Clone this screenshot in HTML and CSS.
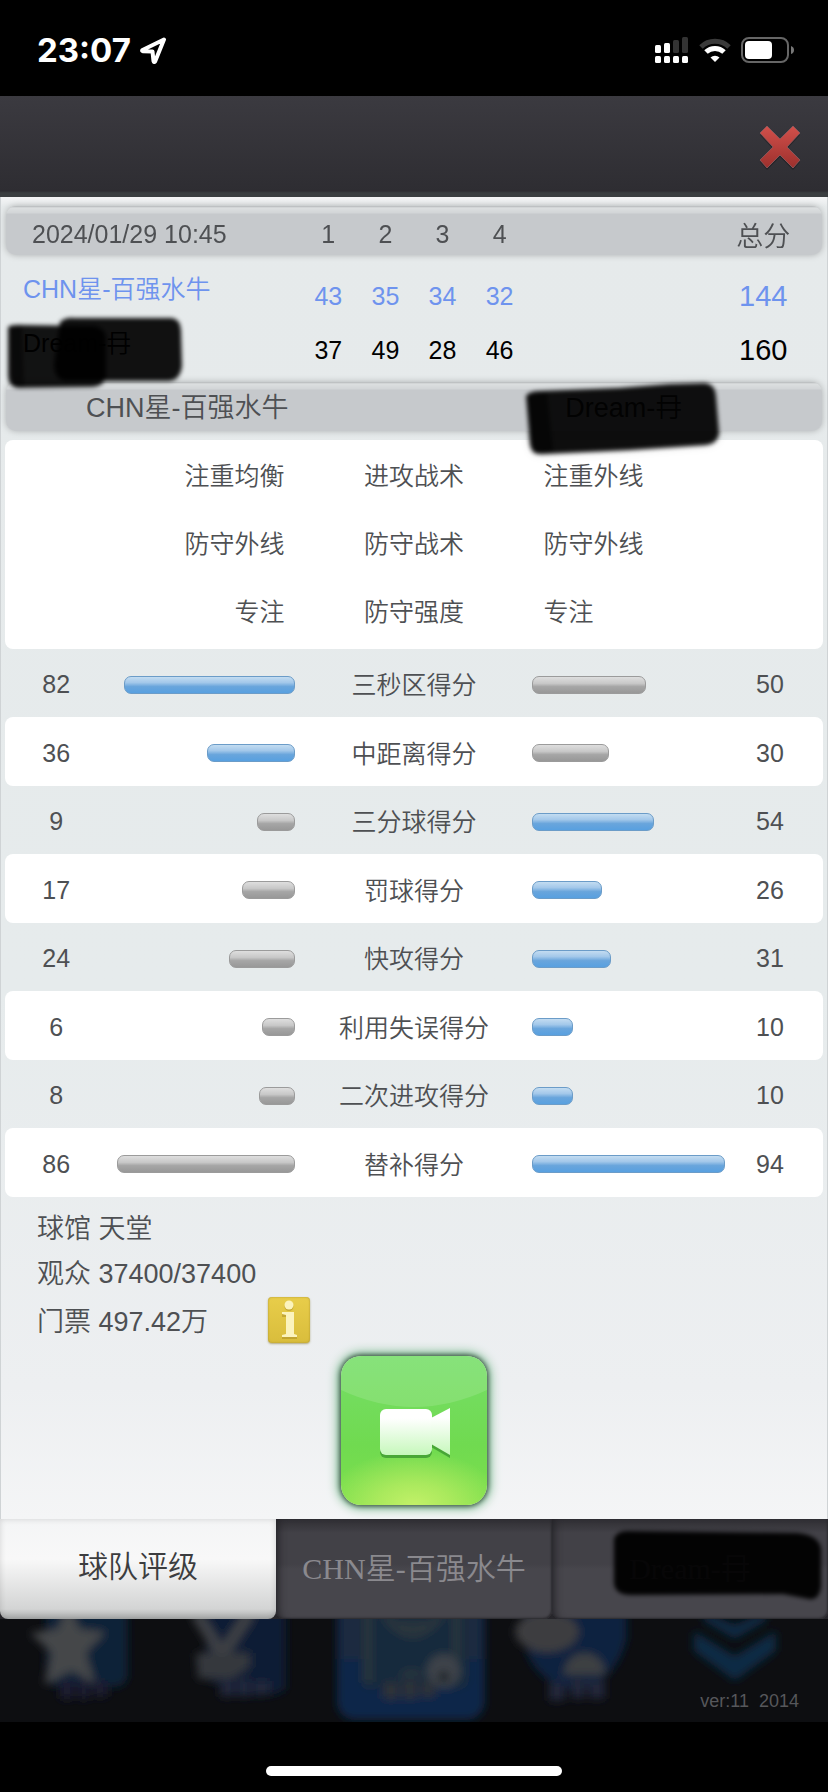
FILE: index.html
```html
<!DOCTYPE html>
<html lang="zh-CN">
<head>
  <meta charset="UTF-8">
  <meta name="viewport" content="width=device-width, initial-scale=1.0">
  <title>球队评级</title>
  <link rel="stylesheet" href="styles.css">
</head>

<body>

  <div class="status-bar">
    <span class="time">23:07</span>
    <svg class="location" width="27" height="27" viewBox="0 0 27 27">
      <path d="M24 2.500 L2.500 13 Q1.500 14 3 14.300 L12.500 14.500 L13.500 24 Q14 26 15.200 24.300 Z" fill="none" stroke="#fff" stroke-width="4" stroke-linejoin="round"/>
    </svg>
    <div class="status-icons">
      <svg width="34" height="27" viewBox="0 0 34 27">
        <g fill="#fff">
          <rect x="0" y="8" width="6" height="8" rx="1.500"/>
          <rect x="9" y="6" width="6" height="10" rx="1.500"/>
          <rect x="0" y="19" width="6" height="7" rx="1.500"/>
          <rect x="9" y="19" width="6" height="7" rx="1.500"/>
          <rect x="18" y="19" width="6" height="7" rx="1.500"/>
          <rect x="27" y="19" width="6" height="7" rx="1.500"/>
        </g>
        <g fill="#333">
          <rect x="18" y="3" width="6" height="13" rx="1.500"/>
          <rect x="27" y="0" width="6" height="16" rx="1.500"/>
        </g>
      </svg>
      <svg width="32" height="25" viewBox="0 0 32 25">
        <path d="M2 9 A20 20 0 0 1 30 9" fill="none" stroke="#3a3a3a" stroke-width="5"/>
        <path d="M7 14 A13 13 0 0 1 25 14" fill="none" stroke="#fff" stroke-width="5"/>
        <path d="M16 24 L11.500 19.500 A6.500 6.500 0 0 1 20.500 19.500 Z" fill="#fff"/>
      </svg>
      <svg width="54" height="26" viewBox="0 0 54 26">
        <rect x="1" y="1" width="46" height="24" rx="7" fill="none" stroke="#666" stroke-width="2"/>
        <rect x="4" y="4" width="27" height="18" rx="4" fill="#fff"/>
        <path d="M50 9 Q53 10 53 13 Q53 16 50 17 Z" fill="#777"/>
      </svg>
    </div>
  </div>

  <header class="title-bar">
    <button class="close" aria-label="关闭">
      <svg width="44" height="48" viewBox="0 0 44 48">
        <defs>
          <linearGradient id="red" x1="0" y1="0" x2="0" y2="1">
            <stop offset="0" stop-color="#d2504b"/>
            <stop offset="1" stop-color="#9c302d"/>
          </linearGradient>
        </defs>
        <path d="M2 39 L15 26 L2 12 L9 5 L22 18 L35 5 L42 12 L29 26 L42 39 L35 47 L22 34 L9 47 Z" fill="#1d1c20" opacity=".6"/>
        <path d="M2 37 L15 24 L2 10 L9 3 L22 16 L35 3 L42 10 L29 24 L42 37 L35 45 L22 32 L9 45 Z" fill="url(#red)" stroke="#8f5c60" stroke-width=".8"/>
      </svg>
    </button>
  </header>

  <main class="panel">

    <table class="score">
      <colgroup>
        <col class="c-name"><col class="c-q"><col class="c-q"><col class="c-q"><col class="c-q"><col><col class="c-total">
      </colgroup>
      <thead>
        <tr><th class="date">2024/01/29 10:45</th><th>1</th><th>2</th><th>3</th><th>4</th><th></th><th class="total-label">总分</th></tr>
      </thead>
      <tbody>
        <tr class="home">
          <td class="name">CHN星-百强水牛</td><td>43</td><td>35</td><td>34</td><td>32</td><td></td><td class="total">144</td>
        </tr>
        <tr class="away">
          <td class="name">Dream-冄
            <svg class="mark mark-score" width="190" height="84" viewBox="0 0 190 84">
              <g filter="url(#soft)">
                <path d="M8 17 Q12 14 24 15 L94 16 Q108 18 106 34 L106 60 Q108 76 92 77 L18 78 Q8 76 8 66 Z" opacity=".92"/>
                <path d="M60 12 Q66 7 74 8 L172 8 Q180 9 181 20 L182 56 Q180 71 168 71 L64 71 Q54 68 54 54 Z" opacity=".93"/>
                <path d="M10 18 L22 17 L24 77 L12 76 Z" opacity=".5"/>
              </g>
            </svg>
          </td>
          <td>37</td><td>49</td><td>28</td><td>46</td><td></td><td class="total">160</td>
        </tr>
      </tbody>
    </table>

    <div class="teams">
      <h2>CHN星-百强水牛</h2>
      <h2>Dream-冄
        <svg class="mark mark-team" width="206" height="84" viewBox="0 0 206 84">
          <g filter="url(#soft)">
            <path d="M7 20 Q10 15 22 15 L100 12 L150 8 L186 7 Q196 8 197 20 L200 56 Q199 68 186 69 L110 74 L22 78 Q12 78 11 68 Z" opacity=".93"/>
            <path d="M8 20 L28 16 L34 76 L14 76 Z" opacity=".6"/>
          </g>
        </svg>
      </h2>
    </div>

    <table class="tactics">
      <tr><td>注重均衡</td><th>进攻战术</th><td>注重外线</td></tr>
      <tr><td>防守外线</td><th>防守战术</th><td>防守外线</td></tr>
      <tr><td>专注</td><th>防守强度</th><td>专注</td></tr>
    </table>

    <table class="stats">
      <colgroup>
        <col class="s-num"><col class="s-left"><col class="s-label"><col class="s-right"><col>
      </colgroup>
      <tr><td>82</td><td><div class="bar win" style="width: 93%"></div></td><th>三秒区得分</th><td><div class="bar" style="width: 59%"></div></td><td>50</td></tr>
      <tr><td>36</td><td><div class="bar win" style="width: 48%"></div></td><th>中距离得分</th><td><div class="bar" style="width: 40%"></div></td><td>30</td></tr>
      <tr><td>9</td><td><div class="bar" style="width: 21%"></div></td><th>三分球得分</th><td><div class="bar win" style="width: 63%"></div></td><td>54</td></tr>
      <tr><td>17</td><td><div class="bar" style="width: 29%"></div></td><th>罚球得分</th><td><div class="bar win" style="width: 36%"></div></td><td>26</td></tr>
      <tr><td>24</td><td><div class="bar" style="width: 36%"></div></td><th>快攻得分</th><td><div class="bar win" style="width: 41%"></div></td><td>31</td></tr>
      <tr><td>6</td><td><div class="bar" style="width: 18%"></div></td><th>利用失误得分</th><td><div class="bar win" style="width: 21%"></div></td><td>10</td></tr>
      <tr><td>8</td><td><div class="bar" style="width: 20%"></div></td><th>二次进攻得分</th><td><div class="bar win" style="width: 21%"></div></td><td>10</td></tr>
      <tr><td>86</td><td><div class="bar" style="width: 97%"></div></td><th>替补得分</th><td><div class="bar win" style="width: 100%"></div></td><td>94</td></tr>
    </table>

    <div class="arena">
      <p>球馆 天堂</p>
      <p>观众 37400/37400</p>
      <div class="tickets">
        <p>门票 497.42万</p>
        <button class="info" aria-label="门票说明">
          <svg width="42" height="46" viewBox="0 0 42 46">
            <g fill="#a88a25" opacity=".5">
              <circle cx="21" cy="9.500" r="4.500"/>
              <path d="M14 17 H26 V39 H29 V42 H14 V39 H18 V20 H14 Z"/>
            </g>
            <g fill="#fbf3bd">
              <circle cx="21" cy="8" r="4.500"/>
              <path d="M14 15 H26 V37 L29 38 V40 H14 V38 L18 37 V18 L14 17 Z"/>
            </g>
          </svg>
        </button>
      </div>
    </div>

    <button class="video" aria-label="录像">
      <svg width="146" height="149" viewBox="0 0 146 149">
        <defs>
          <linearGradient id="cam" x1="0" y1="0" x2="0" y2="1">
            <stop offset=".2" stop-color="#fff"/>
            <stop offset="1" stop-color="#c6f8bb"/>
          </linearGradient>
        </defs>
        <path d="M0 0 H146 V34 Q73 68 0 34 Z" fill="#fff" opacity=".13"/>
        <g fill="#3d9a30" opacity=".8">
          <rect x="39" y="56" width="52" height="46" rx="6"/>
          <path d="M90 65 L109 55 V102 L90 91 Z"/>
        </g>
        <g fill="url(#cam)">
          <rect x="39" y="53" width="52" height="46" rx="6"/>
          <path d="M90 62 L109 52 V99 L90 88 Z"/>
        </g>
      </svg>
    </button>

  </main>

  <nav class="tabs">
    <button class="tab active">球队评级</button>
    <button class="tab">CHN星-百强水牛</button>
    <button class="tab">Dream-冄
      <svg class="mark mark-tab" width="220" height="84" viewBox="0 0 220 84">
        <path d="M7 16 Q10 8 20 8 L190 10 Q212 12 214 26 L214 64 Q212 78 202 76 L176 71 L24 72 Q8 72 7 60 Z" filter="url(#soft)" opacity=".95"/>
      </svg>
    </button>
  </nav>

  <div class="menu">
    <svg viewBox="0 0 166 103">
      <g filter="url(#blur)">
        <rect x="46" y="-10" width="82" height="78" rx="12" fill="#0c2039"/>
        <path d="M68 -16 L80 10 L106 13 L86 34 L96 66 L72 52 L44 66 L52 34 L30 14 L58 10 Z" fill="#444648"/>
        <path d="M60 62 h14 v18 h-14 z M78 62 h12 v18 h-12 z M94 62 h14 v16 h-14 z" fill="#1b1e33"/>
      </g>
    </svg>
    <svg viewBox="0 0 166 103">
      <g filter="url(#blur)">
        <path d="M40 -10 H120 V70 Q110 80 70 76 L40 60 Z" fill="#0b1c36"/>
        <path d="M30 -6 L56 36 L84 -6 M56 30 V58" fill="none" stroke="#3e4145" stroke-width="12"/>
        <path d="M30 34 H84 V48 L66 60 H32 Z" fill="#34383c"/>
        <path d="M54 62 h14 v16 h-14 z M72 60 h12 v18 h-12 z M88 62 h16 v14 h-16 z" fill="#22253a"/>
      </g>
    </svg>
    <svg viewBox="0 0 166 103">
      <g filter="url(#blur)">
        <rect x="6" y="-20" width="148" height="121" rx="18" fill="#10264a"/>
        <rect x="10" y="-20" width="140" height="60" fill="#1f2c3f"/>
        <rect x="30" y="-20" width="108" height="90" rx="8" fill="#172a3c"/>
        <path d="M37 -10 V64 M54 -4 Q82 34 110 -4 M62 6 H102 M126 -6 V40" fill="none" stroke="#2a363d" stroke-width="8"/>
        <path d="M66 58 Q80 42 96 58 Z" fill="#2a363f"/>
        <circle cx="113" cy="52" r="17" fill="#3c4348"/>
        <circle cx="113" cy="58" r="5" fill="#10181f"/>
        <path d="M52 64 h16 v16 h-16 z M72 62 h14 v18 h-14 z M90 64 h14 v14 h-14 z" fill="#2d3038"/>
      </g>
    </svg>
    <svg viewBox="0 0 166 103">
      <g filter="url(#blur)">
        <path d="M26 -10 H130 V20 Q120 60 84 72 Q44 68 30 34 Z" fill="#0a2140"/>
        <ellipse cx="50" cy="13" rx="32" ry="20" fill="#3d3e40"/>
        <path d="M66 56 Q70 34 89 34 Q107 36 109 56 Z" fill="#3d4042"/>
        <path d="M52 64 h16 v18 h-16 z M74 60 h14 v20 h-14 z M92 62 h16 v18 h-16 z" fill="#20253a"/>
      </g>
    </svg>
    <div class="more">
      <svg viewBox="0 0 166 103">
        <g filter="url(#blur)" fill="#102b44">
          <path d="M42 -8 L73 6 L104 -8 V2 L73 20 L42 2 Z"/>
          <path d="M32 12 L73 37 L114 12 V32 L73 62 L32 32 Z"/>
        </g>
      </svg>
      <span class="version">ver:11&nbsp; 2014</span>
    </div>
  </div>

  <div class="home-area"><div class="home-indicator"></div></div>

  <!-- shared filters -->
  <svg class="defs" width="0" height="0">
    <filter id="soft" x="-10%" y="-10%" width="120%" height="120%"><feGaussianBlur stdDeviation="2"/></filter>
    <filter id="blur" x="-20%" y="-20%" width="140%" height="140%"><feGaussianBlur stdDeviation="4"/></filter>
  </svg>

</body>
</html>
```
FILE: styles.css
```css
* {
  box-sizing: border-box;
}

body {
  margin: 0;
  background: #000;
  color: #4e5053;
  font-family: "Liberation Sans", "Noto Sans CJK SC", sans-serif;
  font-size: 25px;
  font-weight: 350;
}

button {
  border: 0;
  padding: 0;
  background: none;
  color: inherit;
  font: inherit;
  cursor: pointer;
}

svg {
  display: block;
}

h2, p {
  margin: 0;
  font-size: inherit;
  font-weight: inherit;
}

table {
  width: 100%;
  table-layout: fixed;
  border-spacing: 0;
}

th, td {
  padding: 0;
  font-weight: inherit;
  text-align: center;
}

/* status bar */

.status-bar {
  display: flex;
  align-items: center;
  height: 96px;
  padding: 4px 33px 0 37px;
}

.time {
  color: #fff;
  font-family: Inter, sans-serif;
  font-size: 33px;
  font-weight: 700;
}

.location {
  margin-left: 9px;
}

.status-icons {
  display: flex;
  align-items: center;
  gap: 10px;
  margin-left: auto;
}

/* title bar */

.title-bar {
  display: flex;
  align-items: center;
  justify-content: flex-end;
  height: 101px;
  padding-right: 26px;
  background: linear-gradient(#3b3a40, #2e2d32 94%, #3a3e40 96%);
}

/* panel */

.panel {
  padding: 9px 4px 14px;
  border: solid #cfd3d5;
  border-width: 0 1px;
  background: linear-gradient(#f4f5f6, #e6eaeb 10px, #e6ebec 60%, #edeff1 90%, #f4f5f6);
}

.score,
.teams {
  padding: 0 1px;
}

.score th,
.teams {
  height: 49px;
  background: linear-gradient(#b4b7b9, #dcdfe0 2px, #d2d5d7 7px, #c6c9cc 8px, #c6c9cc);
}

.score th {
  padding-top: 8px;
}

.score thead,
.teams {
  filter: drop-shadow(0 0 3px rgba(0, 0, 0, .25));
}

.score th:first-child {
  border-radius: 10px 0 0 10px;
}

.score th:last-child {
  border-radius: 0 10px 10px 0;
}

.c-name {
  width: 36%;
}

.c-q {
  width: 7%;
}

.c-total {
  width: 15%;
}

.score .date,
.score .name {
  text-align: left;
}

.score .date {
  padding-left: 26px;
}

.score .total,
.score .total-label {
  padding-left: 5px;
}

.score td {
  height: 54px;
}

.home td {
  height: 68px;
  padding-top: 14px;
}

.home {
  color: #6e93ee;
}

.away {
  color: #000;
}

.score td.name {
  position: relative;
  padding-left: 17px;
  padding-bottom: 18px;
}

.score .total {
  font-size: 29px;
}

.score .total-label {
  font-size: 27px;
}

.teams {
  position: relative;
  display: grid;
  grid-template-columns: 44% 1fr;
  align-items: center;
  margin: 5px 1px 9px;
  padding-bottom: 3px;
  border-radius: 10px;
  font-size: 27px;
}

.teams h2 {
  position: relative;
  padding-left: 79px;
}

.teams h2 + h2 {
  padding-left: 200px;
  color: #222;
}

/* marker strokes over the hidden names */

.mark {
  position: absolute;
  z-index: 1;
  pointer-events: none;
}

.mark-score {
  left: -6px;
  top: -13px;
}

.mark-team {
  left: 154px;
  top: -10px;
}

.mark-tab {
  right: 1px;
  top: 4px;
}

.tactics {
  padding-bottom: 5px;
  border-radius: 8px;
  background: #fff;
}

.tactics td,
.tactics th {
  height: 68px;
}

.tactics th {
  width: 29%;
}

.tactics td:first-child {
  padding-right: 11px;
  text-align: right;
}

.tactics td:last-child {
  padding-left: 11px;
  text-align: left;
}

.stats td,
.stats th {
  height: 68px;
}

.stats td {
  padding-top: 3px;
}

.stats tr:nth-child(even) > * {
  height: 69px;
  background: #fff;
}

.stats tr > :first-child {
  padding-right: 4px;
  border-radius: 8px 0 0 8px;
}

.stats tr > :nth-child(2) {
  padding-right: 4px;
}

.stats tr > :nth-child(4) {
  padding-left: 4px;
}

.stats tr > :last-child {
  padding-right: 8px;
  border-radius: 0 8px 8px 0;
}

.s-num {
  width: 13%;
}

.s-left {
  width: 23%;
}

.s-label {
  width: 28%;
}

.s-right {
  width: 24%;
}

.bar {
  height: 18px;
  border: 1px solid #9b9b9b;
  border-radius: 7px;
  background: linear-gradient(#dedede, #c8c8c8 40%, #a6a6a6 60%, #989898);
}

.bar.win {
  border-color: #6b9cc8;
  background: linear-gradient(#c3dcf1, #a3c8ea 35%, #69a5dc 60%, #58a0e0);
}

.stats td:nth-child(2) .bar {
  margin-left: auto;
}

/* arena */

.arena {
  padding: 10px 32px 0;
  font-size: 27px;
  line-height: 45px;
}

.tickets {
  display: flex;
  gap: 60px;
  line-height: 50px;
}

.info {
  height: 46px;
  border-radius: 4px;
  background: linear-gradient(#e8cd4a, #d9bd3c);
  box-shadow: inset 0 0 2px #a58c2c, 0 1px 2px rgba(120, 100, 20, .5);
}

.video {
  display: block;
  width: 146px;
  height: 149px;
  margin: 9px auto 0;
  border-radius: 20px;
  overflow: hidden;
  background:
    radial-gradient(ellipse 90px 54px at 50% 100%, #c2f168, rgba(190, 238, 100, .7) 40%, transparent),
    linear-gradient(#76de68, #70da50 60%, #7ee04c);
  box-shadow: 0 0 5px 1px #3c4a40, 0 0 11px 3px #6bb483;
}

/* tabs */

.tabs {
  display: grid;
  grid-template-columns: repeat(3, 1fr);
  height: 100px;
  background: #26252a;
}

.tab {
  position: relative;
  padding-bottom: 6px;
  border-radius: 0 0 8px 8px;
  background: linear-gradient(#2f2e33, #424147 14px, #424147 45%, #47464c 50%, #47464c);
  box-shadow: inset 8px 0 8px -6px #222126, inset -1px -1px 2px #2b2a2f;
  color: #8a898e;
  font-family: "Liberation Serif", "Noto Sans CJK SC", serif;
  font-size: 30px;
}

.tab.active {
  padding-bottom: 10px;
  background: linear-gradient(#f4f5f6, #f8f8f8 40%, #d3d4d4 90%, #a9abab);
  box-shadow: inset 0 0 6px rgba(0, 0, 0, .15);
  color: #3c3d3f;
}

/* dimmed menu behind the dialog */

.menu {
  display: grid;
  grid-template-columns: repeat(5, 1fr);
  background: #0d0e11;
}

.menu svg {
  width: 100%;
  overflow: hidden;
}

.more {
  position: relative;
}

.version {
  position: absolute;
  right: 29px;
  bottom: 10px;
  color: #56575b;
  font-size: 18px;
}

.home-area {
  padding: 44px 0 16px;
}

.home-indicator {
  width: 296px;
  height: 10px;
  margin: 0 auto;
  border-radius: 5px;
  background: #fff;
}

.defs {
  position: absolute;
}
```
